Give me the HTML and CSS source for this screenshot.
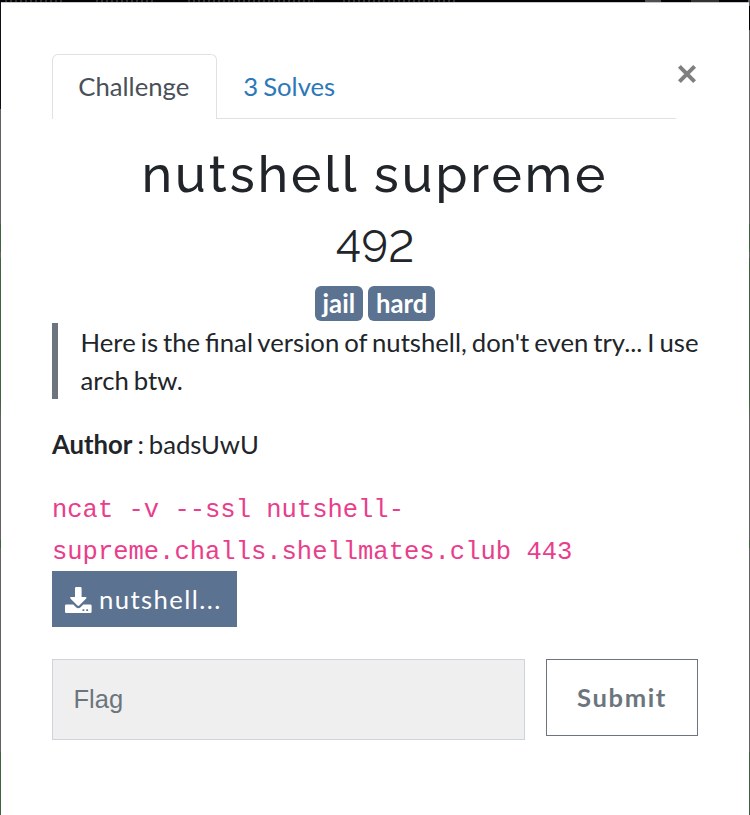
FILE: index.html
```
<!DOCTYPE html>
<html lang="en">
<head>
<meta charset="utf-8">
<title>nutshell supreme</title>
<link rel="stylesheet" href="styles.css">
</head>
<body>
<div class="backdrop"></div>
<main class="modal">
  <header class="top">
    <nav class="tabs">
      <a class="tab active">Challenge</a>
      <a class="tab">3 Solves</a>
    </nav>
    <button class="close" aria-label="Close"><svg width="20" height="20" viewBox="0 0 20 20"><path d="M2.4 2.4 17.6 17.6M17.6 2.4 2.4 17.6" stroke="#7f7f7f" stroke-width="4"/></svg></button>
  </header>
  <h2 class="name">nutshell supreme</h2>
  <h3 class="value">492</h3>
  <div class="tags"><span class="tag">jail</span><span class="tag">hard</span></div>
  <blockquote class="quote">Here is the final version of nutshell, don't even try... I use arch btw.</blockquote>
  <p class="author"><strong>Author</strong> : badsUwU</p>
  <p class="command"><code>ncat -v --ssl nutshell-<br>supreme.challs.shellmates.club 443</code></p>
  <a class="download">
    <svg width="27" height="27" viewBox="0 0 27 27" fill="#fff"><path d="M10 1.2Q10 0 11.2 0h4.2q1.2 0 1.2 1.2V10h4q1.5.1.6 1.5l-7 7.1q-.9.9-1.8 0l-7-7.1Q4.500 10.100 6 10h4z"/><path fill-rule="evenodd" d="M1.300 17.500h7l2.700 2.700q2.300 1.900 4.600 0l2.700-2.700h7q1.300 0 1.300 1.300v6q0 1.300-1.300 1.300h-24Q0 26.100 0 24.800v-6q0-1.300 1.300-1.300zM17.500 22.300v1.700h1.800v-1.700zM21.300 22.300v1.700h1.800v-1.700z"/></svg>
    <span>nutshell...</span>
  </a>
  <form class="answer">
    <input class="flag" type="text" placeholder="Flag">
    <button class="submit" type="button">Submit</button>
  </form>
</main>
</body>
</html>
```

FILE: styles.css
```
* { box-sizing: border-box; }
html { font-size: 25.7px; }
body {
  margin: 0;
  height: 815px;
  overflow: hidden;
  position: relative;
  font: 400 1rem/38px Lato, "Liberation Sans", sans-serif;
  word-spacing: -1.6px;
  color: #212529;
  background: #626262;
}
.backdrop {
  position: absolute;
  inset: 0;
  background:
    repeating-linear-gradient(90deg, #55555588 0 2px, transparent 2px 5px) 5px 0 / 57px 2px no-repeat,
    repeating-linear-gradient(90deg, #55555588 0 2px, transparent 2px 5px) 96px 0 / 60px 2px no-repeat,
    repeating-linear-gradient(90deg, #55555588 0 2px, transparent 2px 5px) 188px 0 / 126px 2px no-repeat,
    repeating-linear-gradient(90deg, #55555588 0 2px, transparent 2px 5px) 343px 0 / 114px 2px no-repeat,
    linear-gradient(#514d52, #514d52) 645px 0 / 16px 2px no-repeat,
    linear-gradient(#333, #333) 691px 0 / 28px 2px no-repeat,
    linear-gradient(#030207, #030207) 0 0 / 748px 2px no-repeat,
    linear-gradient(#11101a, #11101a) 0 0 / 1px 109px no-repeat,
    linear-gradient(#000, #000) 749px 6px / 1px 24px no-repeat,
    linear-gradient(#626262 224px, #42613f 224px 252px, #626262 252px 258px, #42613f 258px 400px, #626262 420px 540px, #626262 540px, #42613f 540px 548px, #626262 548px 752px, #42613f 752px);
}
.modal {
  position: relative;
  height: 813px;
  margin: 2px 1px 0;
  padding: 51px 51px 0;
  background: #fff;
  border-top: 1px solid #c8c8c8;
}
.top { display: flex; justify-content: space-between; height: 65px; }
.tabs { display: flex; width: 624px; border-bottom: 1px solid #dee2e6; }
.tab {
  height: 65px;
  padding: 12px 25.3px 0;
  border: 1px solid transparent;
  border-bottom: 0;
  color: #2d78b9;
}
.tab.active {
  width: 165px;
  color: #495057;
  background: #fff;
  border-color: #dee2e6;
  border-radius: 6px 6px 0 0;
}
.close { width: 21px; padding: 10px 0 0; border: 0; background: none; display: flex; align-items: flex-start; }
.close svg { flex: none; }
h2, h3, p, blockquote { margin: 0; font-weight: 400; }
.name {
  margin-top: 25px;
  height: 61px;
  text-align: center;
  font: 500 51.2px/61px Raleway, Lato, sans-serif;
  letter-spacing: 3px;
  word-spacing: 0;
  white-space: nowrap;
}
.value {
  margin-top: 14px;
  height: 53px;
  text-align: center;
  font: 400 44.8px/54px Raleway, Lato, sans-serif;
  font-variant-numeric: lining-nums;
}
.tags { display: flex; justify-content: center; gap: 5px; margin-top: 14px; height: 35px; }
.tag {
  padding: 0 8px;
  border-radius: 6px;
  background: #5b7290;
  color: #fff;
  font-weight: 700;
  line-height: 35px;
}
.quote {
  margin: 2px -6px 0 0;
  padding-left: 22.6px;
  border-left: 6px solid #6c757d;
  height: 76px;
}
.author { margin-top: 26px; }
.command {
  margin-top: 27px;
  height: 81px;
  color: #e83e8c;
  font: 25.5px/42px "Liberation Mono", monospace;
  word-spacing: 0;
}
.command code { font: inherit; }
.download {
  display: flex;
  gap: 7px;
  width: 185px;
  height: 56px;
  padding: 15px 13px 0;
  background: #5b7290;
  color: #fff;
  letter-spacing: 1.4px;
}
.download svg { flex: none; margin-top: 1px; }
.download span { line-height: 27px; }
.answer { display: flex; align-items: flex-start; justify-content: space-between; margin-top: 32px; }
.flag {
  width: 473px;
  height: 81px;
  padding: 0 20.5px;
  border: 1px solid #ced4da;
  border-radius: 0;
  background: #efefef;
  font: 25.5px "Liberation Sans", sans-serif;
}
.flag::placeholder { color: #6c757d; opacity: 1; }
.submit {
  width: 152px;
  height: 77px;
  padding: 0 0 2px;
  border: 1px solid #6c757d;
  background: #fff;
  color: #6c757d;
  font: 700 25.6px Lato, sans-serif;
  letter-spacing: 1.6px;
}
```
